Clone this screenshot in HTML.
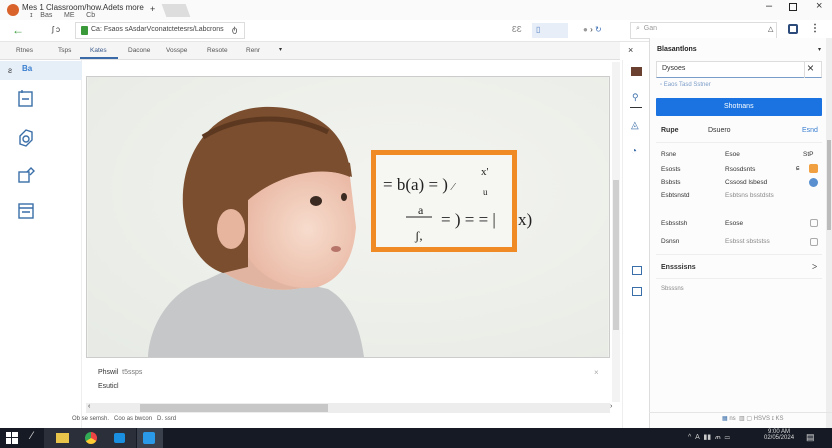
<!DOCTYPE html>
<html><head><meta charset="utf-8"><style>
*{margin:0;padding:0;box-sizing:border-box}
body{width:832px;height:448px;overflow:hidden;background:#fff;font-family:"Liberation Sans",sans-serif;font-size:8px;color:#333;position:relative}
.a{position:absolute}
.t{position:absolute;white-space:nowrap}
</style></head><body>
<div class="a" style="left:0;top:0;width:832px;height:20px;background:#fafafa"></div>
<div class="a" style="left:7px;top:4px;width:12px;height:12px;border-radius:50%;background:#d9622b"></div>
<div class="t" style="left:22px;top:3px;font-size:8px;color:#333">Mes 1 Classroom/how.Adets more</div>
<div class="t" style="left:30px;top:12px;font-size:7px;color:#555">ɪ &nbsp;&nbsp; Bas &nbsp;&nbsp;&nbsp;&nbsp; ME &nbsp;&nbsp;&nbsp;&nbsp; Cb</div>
<div class="t" style="left:150px;top:4px;font-size:9px">+</div>
<div class="a" style="left:164px;top:4px;width:24px;height:13px;background:#ddd;transform:skewX(20deg)"></div>
<div class="t" style="left:766px;top:0px;font-size:11px">–</div>
<div class="a" style="left:789px;top:3px;width:8px;height:8px;border:1.5px solid #222"></div>
<div class="t" style="left:816px;top:0px;font-size:11px">×</div>
<div class="a" style="left:0;top:20px;width:832px;height:22px;background:#fff;border-bottom:1px solid #e6e6e6"></div>
<div class="t" style="left:12px;top:23px;font-size:12px;color:#3a9a3a">←</div>
<div class="t" style="left:52px;top:25px;font-size:8px">ʃ ɔ</div>
<div class="a" style="left:75px;top:22px;width:170px;height:17px;border:1px solid #ddd;background:#fff"></div>
<div class="a" style="left:81px;top:26px;width:7px;height:9px;background:#3a9a3a;border-radius:1px"></div>
<div class="t" style="left:91px;top:26px;font-size:7px;color:#444">Ca: Fsaos sAsdarVconatctetesrs/Labcrons</div>
<div class="t" style="left:232px;top:25px;font-size:8px">ტ</div>
<div class="t" style="left:512px;top:25px;font-size:8px;color:#777">ƐƐ</div>
<div class="a" style="left:532px;top:23px;width:36px;height:15px;background:#e7eef7"></div>
<div class="t" style="left:536px;top:25px;font-size:8px;color:#5a86c6">▯</div>
<div class="t" style="left:583px;top:25px;font-size:8px;color:#999">● <span style="color:#333">›</span> <span style="color:#3b6fb5">↻</span></div>
<div class="a" style="left:630px;top:22px;width:147px;height:17px;border:1px solid #ddd"></div>
<div class="t" style="left:636px;top:25px;font-size:7px;color:#999">⌕ &nbsp;Gan</div>
<div class="t" style="left:768px;top:25px;font-size:7px">△</div>
<div class="a" style="left:788px;top:24px;width:10px;height:10px;border:2px solid #2c4a7a;border-radius:2px"></div>
<div class="t" style="left:810px;top:23px;font-size:10px;font-weight:bold">⋮</div>
<div class="a" style="left:0;top:42px;width:620px;height:18px;background:#f5f5f5;border-bottom:1px solid #e0e0e0"></div>
<div class="t" style="left:16px;top:47px;font-size:6.5px;color:#555">Rtnes</div>
<div class="t" style="left:58px;top:47px;font-size:6.5px;color:#555">Tsps</div>
<div class="t" style="left:90px;top:47px;font-size:6.5px;color:#3b5a8a">Kates</div>
<div class="a" style="left:80px;top:57px;width:38px;height:2px;background:#3a6ba8"></div>
<div class="t" style="left:128px;top:47px;font-size:6.5px;color:#555">Dacone</div>
<div class="t" style="left:166px;top:47px;font-size:6.5px;color:#555">Vosspe</div>
<div class="t" style="left:207px;top:47px;font-size:6.5px;color:#555">Resote</div>
<div class="t" style="left:246px;top:47px;font-size:6.5px;color:#555">Renr</div>
<div class="t" style="left:279px;top:46px;font-size:6px">▾</div>
<div class="t" style="left:628px;top:45px;font-size:9px">×</div>
<div class="a" style="left:0;top:60px;width:82px;height:368px;background:#fff;border-right:1px solid #eee"></div>
<div class="a" style="left:0;top:61px;width:82px;height:19px;background:#e6eef8"></div>
<div class="t" style="left:8px;top:66px;font-size:8px">ƨ</div>
<div class="t" style="left:22px;top:64px;font-size:8px;color:#3a7fd0;font-weight:bold">Ba</div>
<svg class="a" style="left:14px;top:84px" width="24" height="140" fill="none" stroke="#3a6ea8" stroke-width="1.4">
<rect x="5" y="8" width="13" height="14"/><path d="M8 6v3M8 15h7"/>
<path d="M6 52l6-6 6 2v8l-6 6-6-2z"/><circle cx="12" cy="55" r="3"/>
<rect x="5" y="88" width="10" height="10"/><path d="M13 88l4-4 3 3-4 4"/>
<rect x="5" y="120" width="14" height="14"/><path d="M5 124h14M8 128h8"/>
</svg>
<div class="a" style="left:86px;top:76px;width:524px;height:282px;border:1px solid #ccc;overflow:hidden;background:#eff1ec">
<svg width="522" height="280" viewBox="0 0 520 280">
<defs>
<radialGradient id="bg" cx="0.6" cy="0.4" r="0.8"><stop offset="0" stop-color="#f3f4f0"/><stop offset="1" stop-color="#e8ebe5"/></radialGradient>
<radialGradient id="sk" cx="0.55" cy="0.5" r="0.6"><stop offset="0" stop-color="#f7dccd"/><stop offset="1" stop-color="#e9b8a4"/></radialGradient>
</defs>
<rect width="520" height="280" fill="url(#bg)"/>
<path d="M60 280 C62 245 85 212 118 203 L135 195 C160 212 200 218 222 208 L240 212 C262 225 272 250 276 280Z" fill="#c5c7c9"/>
<path d="M135 195 C140 180 150 175 160 180 L215 200 L222 208 C200 218 160 212 135 195Z" fill="#e0b4a0"/>
<path d="M262 95 C258 50 220 28 175 30 C120 33 92 80 95 130 C98 165 112 188 135 196 L160 190 L160 120 C185 105 220 95 262 100Z" fill="#7a4e2e"/>
<path d="M160 108 C200 92 240 90 262 100 L268 150 C266 175 258 200 230 210 C200 215 172 200 160 180Z" fill="url(#sk)"/>
<path d="M158 125 C185 100 230 86 264 100 L262 86 C230 74 185 82 155 108Z" fill="#7a4e2e"/>
<path d="M115 60 C150 38 200 36 240 55" stroke="#5c3820" stroke-width="5" fill="none"/>
<ellipse cx="143" cy="152" rx="14" ry="20" fill="#e7b49e"/>
<ellipse cx="228" cy="124" rx="6" ry="5" fill="#3a2a22"/>
<ellipse cx="256" cy="120" rx="3" ry="4" fill="#3a2a22"/>
<ellipse cx="248" cy="172" rx="5" ry="3" fill="#b7756a"/>
<rect x="285.5" y="75.5" width="141" height="97" fill="#f6f7f2" stroke="#f08a24" stroke-width="5"/>
<g font-family="Liberation Serif,serif" font-size="17" fill="#222">
<text x="295" y="113">= b(a) = ) <tspan font-size="11">⁄</tspan></text>
<text x="393" y="98" font-size="11">x'</text>
<text x="395" y="118" font-size="9">u</text>
<line x1="318" y1="140" x2="344" y2="140" stroke="#222"/>
<text x="330" y="137" font-size="12">a</text>
<text x="327" y="163" font-size="13">ʃ,</text>
<text x="353" y="148">= ) = = |</text>
<text x="430" y="148">x)</text>
</g>
</svg></div>
<div class="t" style="left:98px;top:369px;font-size:7px;color:#333">Phswil &nbsp;<span style="color:#777">t5ssps</span></div>
<div class="t" style="left:98px;top:383px;font-size:7px;color:#333">Esuticl</div>
<div class="t" style="left:594px;top:368px;font-size:8px;color:#aaa">×</div>
<div class="a" style="left:612px;top:62px;width:8px;height:340px;background:#f3f3f3"></div>
<div class="a" style="left:613px;top:180px;width:6px;height:150px;background:#cfcfcf"></div>
<div class="a" style="left:86px;top:403px;width:524px;height:10px;background:#ededed"></div>
<div class="a" style="left:140px;top:404px;width:188px;height:8px;background:#c7c7c7"></div>
<div class="t" style="left:88px;top:403px;font-size:7px">‹</div>
<div class="t" style="left:610px;top:403px;font-size:7px">›</div>
<div class="t" style="left:72px;top:416px;font-size:6px;color:#555">Ob se semsh. &nbsp; Coo as bwcon &nbsp; D. ssrd</div>
<div class="a" style="left:622px;top:60px;width:27px;height:368px;background:#fff;border-left:1px solid #eee"></div>
<div class="a" style="left:631px;top:67px;width:11px;height:9px;background:#6a4030"></div>
<div class="t" style="left:632px;top:92px;font-size:9px;color:#3a6ea8">⚲</div>
<div class="a" style="left:630px;top:107px;width:12px;height:1px;background:#333"></div>
<div class="t" style="left:631px;top:120px;font-size:10px;color:#3a6ea8">◬</div>
<div class="t" style="left:631px;top:146px;font-size:10px;color:#3a6ea8">◔</div>
<div class="a" style="left:632px;top:266px;width:10px;height:9px;border:1px solid #3a6ea8"></div>
<div class="a" style="left:632px;top:287px;width:10px;height:9px;border:1px solid #3a6ea8"></div>
<div class="a" style="left:649px;top:38px;width:177px;height:390px;background:#fcfcfc;border-left:1px solid #ddd"></div>
<div class="a" style="left:826px;top:38px;width:6px;height:390px;background:#eee"></div>
<div class="a" style="left:827px;top:140px;width:4px;height:90px;background:#bbb"></div>
<div class="t" style="left:657px;top:46px;font-size:7px;font-weight:bold;color:#222">Blasantlons</div>
<div class="t" style="left:818px;top:46px;font-size:6px">▾</div>
<div class="a" style="left:656px;top:61px;width:166px;height:17px;background:#fff;border:1px solid #ddd;border-bottom:1px solid #7a9cc8"></div>
<div class="t" style="left:662px;top:65px;font-size:7px">Dysoes</div>
<div class="a" style="left:804px;top:61px;width:1px;height:17px;background:#ddd"></div>
<div class="t" style="left:807px;top:61px;font-size:12px">×</div>
<div class="t" style="left:660px;top:82px;font-size:6px;color:#7a9cc8">▫ Eaos Tasd Sstner</div>
<div class="a" style="left:656px;top:98px;width:166px;height:18px;background:#1a73e0;border-radius:1px"></div>
<div class="t" style="left:724px;top:103px;font-size:7px;color:#fff">Shotnans</div>
<div class="t" style="left:661px;top:127px;font-size:7px;font-weight:bold">Rupe</div>
<div class="t" style="left:708px;top:127px;font-size:7px">Dsuero</div>
<div class="t" style="left:802px;top:127px;font-size:7px;color:#3a7fd0">Esnd</div>
<div class="a" style="left:656px;top:142px;width:166px;height:1px;background:#eee"></div>
<div class="t" style="left:661px;top:151px;font-size:6.5px">Rsne</div>
<div class="t" style="left:725px;top:151px;font-size:6.5px">Esoe</div>
<div class="t" style="left:803px;top:151px;font-size:6.5px">StP</div>
<div class="t" style="left:661px;top:166px;font-size:6.5px">Esosts</div>
<div class="t" style="left:725px;top:166px;font-size:6.5px">Rsosdsnts</div>
<div class="t" style="left:796px;top:165px;font-size:7px">ɕ</div>
<div class="a" style="left:809px;top:164px;width:9px;height:9px;background:#f0a040;border-radius:2px"></div>
<div class="t" style="left:661px;top:179px;font-size:6.5px">Bsbsts</div>
<div class="t" style="left:725px;top:179px;font-size:6.5px">Cssosd lsbesd</div>
<div class="a" style="left:809px;top:178px;width:9px;height:9px;background:#5a90d0;border-radius:50%"></div>
<div class="t" style="left:661px;top:192px;font-size:6.5px">Esbtsnstd</div>
<div class="t" style="left:725px;top:192px;font-size:6.5px;color:#888">Esbtsns bsstdsts</div>
<div class="t" style="left:661px;top:220px;font-size:6.5px">Esbsstsh</div>
<div class="t" style="left:725px;top:220px;font-size:6.5px">Esose</div>
<div class="a" style="left:810px;top:219px;width:8px;height:8px;border:1px solid #aaa;border-radius:2px"></div>
<div class="t" style="left:661px;top:238px;font-size:6.5px">Dsnsn</div>
<div class="t" style="left:725px;top:238px;font-size:6.5px;color:#888">Esbsst sbststss</div>
<div class="a" style="left:810px;top:238px;width:8px;height:8px;border:1px solid #aaa;border-radius:2px"></div>
<div class="a" style="left:656px;top:254px;width:166px;height:1px;background:#eee"></div>
<div class="t" style="left:661px;top:264px;font-size:7px;font-weight:bold">Ensssisns</div>
<div class="t" style="left:812px;top:263px;font-size:7px">ᐳ</div>
<div class="a" style="left:656px;top:278px;width:166px;height:1px;background:#eee"></div>
<div class="t" style="left:661px;top:286px;font-size:6px;color:#888">Sbsssns</div>
<div class="a" style="left:649px;top:412px;width:183px;height:1px;background:#e5e5e5"></div>
<div class="t" style="left:722px;top:415px;font-size:6px;color:#3a6ea8">▦ <span style="color:#888">ns &nbsp;▥ ▢ HSVS ɪ KS</span></div>
<div class="a" style="left:0;top:428px;width:832px;height:20px;background:#151a24"></div>
<svg class="a" style="left:6px;top:432px" width="12" height="12"><g fill="#fff"><rect x="0" y="0" width="5" height="5"/><rect x="6" y="0" width="6" height="5"/><rect x="0" y="6" width="5" height="6"/><rect x="6" y="6" width="6" height="6"/></g></svg>
<div class="t" style="left:31px;top:430px;font-size:11px;color:#ddd">⁄</div>
<div class="a" style="left:44px;top:428px;width:92px;height:20px;background:#2a2f3a"></div>
<div class="a" style="left:56px;top:433px;width:13px;height:10px;background:#e8c44a"></div>
<div class="a" style="left:85px;top:432px;width:12px;height:12px;border-radius:50%;background:conic-gradient(#e44 0 33%,#fc3 0 66%,#3a5 0)"></div>
<div class="a" style="left:114px;top:433px;width:11px;height:10px;background:#1a8fe0;border-radius:2px"></div>
<div class="a" style="left:137px;top:428px;width:26px;height:20px;background:#3a404c"></div>
<div class="a" style="left:143px;top:432px;width:12px;height:12px;background:#2a9ae8;border-radius:2px"></div>
<div class="t" style="left:688px;top:433px;font-size:7px;color:#ccc">^ &nbsp;A &nbsp;▮▮ &nbsp;ጠ &nbsp;▭</div>
<div class="t" style="left:764px;top:429px;font-size:6px;color:#ddd;text-align:center">9:00 AM<br>02/05/2024</div>
<div class="t" style="left:806px;top:432px;font-size:9px;color:#ddd">▤</div>
</body></html>
